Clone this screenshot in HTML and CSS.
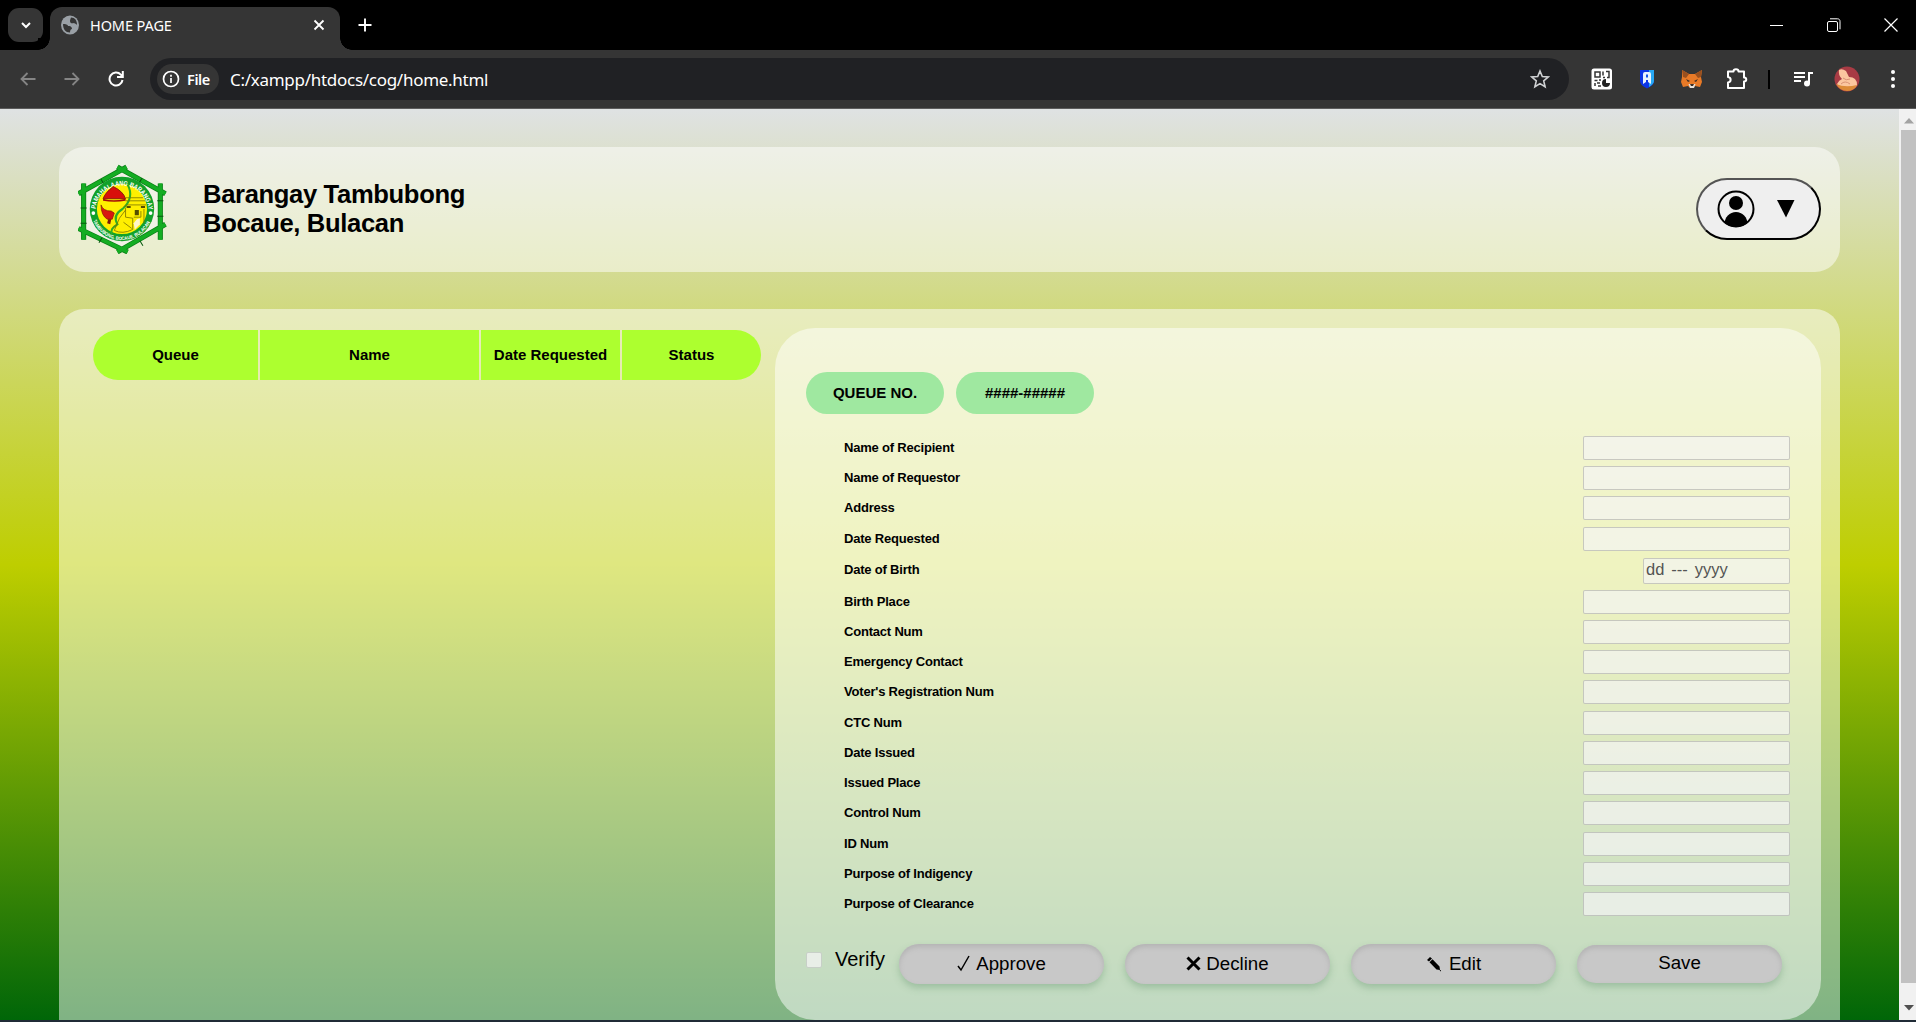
FILE: index.html
```html
<!DOCTYPE html>
<html lang="en">
<head>
<meta charset="utf-8">
<title>HOME PAGE</title>
<link rel="stylesheet" href="styles.css">
</head>
<body>
<header class="browser">
  <div class="tabstrip">
    <button class="tab-search"><svg width="12" height="12" viewBox="0 0 12 12"><path d="M2 4l4 4 4-4" fill="none" stroke="#fff" stroke-width="2"/></svg></button>
    <div class="tab">
      <svg class="globe" width="18" height="20" viewBox="0 0 18 20"><ellipse cx="9" cy="10" rx="9" ry="9.500" fill="#9aa0a6"/><path d="M10 2.500c4 0 6 3 6 7.500-1-1.500-2-1-3-2-2 .5-4 .5-4-2 0-1 .5-2 1-3.500zM2 9c2.500 0 5 .5 5 2 2 0 4 .5 4 3-1 0-2 1-2 3.500C4.500 17.500 2 14 2 9z" fill="#353535"/></svg>
      <span class="tab-title">HOME PAGE</span>
      <svg width="12" height="12" viewBox="0 0 12 12"><path d="M1.500 1.500l9 9m0-9l-9 9" stroke="#fff" stroke-width="1.800"/></svg>
    </div>
    <svg class="new-tab" width="14" height="14" viewBox="0 0 14 14"><path d="M7 .5v13M.5 7h13" stroke="#fff" stroke-width="1.900"/></svg>
    <div class="window-buttons">
      <svg width="14" height="14" viewBox="0 0 14 14"><path d="M0 7.500h13" stroke="#fff"/></svg>
      <svg width="14" height="14" viewBox="0 0 14 14" fill="none" stroke="#fff"><rect x=".5" y="3.500" width="10" height="10" rx="1.500"/><path d="M3 .8h7.500c1.500 0 2.500 1 2.500 2.500v8"/></svg>
      <svg width="14" height="14" viewBox="0 0 14 14"><path d="M.5.5l13 13m0-13l-13 13" stroke="#fff" stroke-width="1.200"/></svg>
    </div>
  </div>
  <div class="toolbar">
    <svg class="nav dim" width="16" height="14" viewBox="0 0 16 14"><path d="M15.500 7H1.500M7.500 1l-6 6 6 6"/></svg>
    <svg class="nav dim" width="16" height="14" viewBox="0 0 16 14"><path d="M.5 7h14M8.500 1l6 6-6 6"/></svg>
    <svg class="nav reload" width="16" height="16" viewBox="0 0 16 16"><path d="M14.500 9A6.500 6.500 0 1 1 12.800 3.600L14.500 5.500M14.800 0v6H9"/></svg>
    <div class="omnibox">
      <div class="file-chip">
        <svg width="18" height="18" viewBox="0 0 18 18" fill="none" stroke="#fff" stroke-width="1.700"><circle cx="9" cy="9" r="7.500"/><path d="M9 8v5M9 4.800v1.900"/></svg>
        <span>File</span>
      </div>
      <span class="url">C:/xampp/htdocs/cog/home.html</span>
      <svg class="star" width="20" height="20" viewBox="0 0 20 20"><path d="M10 2l2.300 5.500 5.900.5-4.500 3.900 1.400 5.800L10 14.600l-5.100 3.100 1.400-5.800L1.800 8l5.900-.5z" fill="none" stroke="#d0d2d4" stroke-width="1.600"/></svg>
    </div>
    <div class="extensions">
      <svg width="22" height="22" viewBox="0 0 22 22"><rect x=".5" y=".5" width="20.500" height="21" rx="2.500" fill="#fff"/><g fill="none" stroke="#333" stroke-width="1.500"><rect x="4" y="4" width="5" height="5"/><path d="M12 3.500v4M15 3.500h3v6h-2M12 9.500h2M3.500 12.500h3M8 12h2M4 15v3M6 15h3M7 18h3"/></g><path d="M15 11a4 4 0 1 0 4 4h-4z" fill="#222"/></svg>
      <svg width="16" height="20" viewBox="0 0 16 20"><path d="M1 1h14v11q0 4-7 7.500Q1 16 1 12z" fill="#0b35e8"/><path d="M10 1h5v11q0 3-5 6z" fill="#27a8f4"/><path d="M4 15V5q0-2 2-2h4q2 0 2 2v10l-3-2v-2H7v2z" fill="#e8f3ff"/><path d="M7 5.500h2v3H7z" fill="#1254e8"/></svg>
      <svg width="22" height="20" viewBox="0 0 22 20"><path d="M1 1l7 4h6l7-4-1 7 1 5-2 5-5-1-2 2h-3l-2-2-5 1-2-5 1-5z" fill="#e87a27"/><path d="M1 1l7 4-3 4-3-1zM21 1l-7 4 3 4 3-1z" fill="#99501f"/><path d="M7.500 15h7L13 19H9z" fill="#e8e1d8"/><path d="M9 15h4l-1 2h-2zM5 10l4 2-2 1zM17 10l-4 2 2 1z" fill="#3a2c24"/></svg>
      <svg width="22" height="22" viewBox="0 0 22 22"><path d="M2 3.500h5.500c0-3 5-3 5 0H18v6c3 0 3 4 0 4V20H2v-5.500c3.500-.5 3.500-5 0-5.500z" fill="none" stroke="#fff" stroke-width="2" stroke-linejoin="round"/></svg>
      <span class="divider"></span>
      <svg width="21" height="16" viewBox="0 0 21 16"><path d="M1 2h11M1 6h11M1 10h7M16 12V2h4" fill="none" stroke="#fff" stroke-width="2"/><circle cx="14" cy="12.500" r="3" fill="#fff"/></svg>
      <svg width="26" height="26" viewBox="0 0 26 26"><circle cx="13" cy="13" r="12.500" fill="#a83b44"/><path d="M3 18q2-4 5-5-4-4-3-9 3-2 7 1 2 4 3 6 8 0 8 8-2 5-10 5-8-1-10-6z" fill="#fbc69f"/><path d="M2 18q9 4 21 1-3 6-10 6T2 18z" fill="#dc8b38"/><path d="M9 12q3 3 7 1M7 18q4-4 9 0" fill="none" stroke="#d99274"/></svg>
      <svg width="6" height="20" viewBox="0 0 6 20" fill="#fff"><circle cx="3" cy="3" r="2"/><circle cx="3" cy="10" r="2"/><circle cx="3" cy="17" r="2"/></svg>
    </div>
  </div>
</header>
<div class="viewport">
  <main class="page">
    <section class="banner">
      <svg class="seal" width="90" height="90" viewBox="1.500 1 88 88">
        <path d="M45 5L81 26v39L45 86 9 65V26z" fill="#f1f2e6"/>
        <g stroke="#0b7d17" stroke-width="5" fill="none"><path d="M7 20v55M82 20v55M2 30L49 4M40 4l47 26M2 64l48 23M40 87l47-27"/></g>
        <g stroke="#14ad22" stroke-width="3.600" fill="none"><path d="M7 20v55M82 20v55M2 30L49 4M40 4l47 26M2 64l48 23M40 87l47-27"/></g>
        <path d="M4 44h6M4 59h6M79 37h6M79 52h6M24 16l3 5M64 15l-3 5M25 73l-3 5M62 76l3 5" stroke="#07580f" stroke-width="1"/>
        <circle cx="44.500" cy="45" r="31.500" fill="#12a12a"/>
        <circle cx="44.500" cy="45" r="24.500" fill="#ffef00"/>
        <path id="ring-top" d="M18.500 48a26 26 0 1 1 52 0" fill="none"/>
        <path id="ring-bottom" d="M15.700 54.500a30.300 30.300 0 0 0 57.600 0" fill="none"/>
        <text class="seal-text"><textPath href="#ring-top" startOffset="3" textLength="76" lengthAdjust="spacingAndGlyphs">PAMAHALAANG BARANGAY</textPath></text>
        <text class="seal-text small"><textPath href="#ring-bottom" startOffset="2" textLength="70" lengthAdjust="spacingAndGlyphs">TAMBUBONG, BOCAUE, BULACAN</textPath></text>
        <circle cx="16.500" cy="49" r="1.800" fill="#fff"/><circle cx="72.500" cy="49" r="1.800" fill="#fff"/>
        <path d="M50 21q7 13-5 24-10 6-5 15-8 5-5 9" fill="none" stroke="#2eaf24" stroke-width="2"/>
        <path d="M26 35q2-6 10-12 10 5 12 12z" fill="#d90f0b" stroke="#721507" stroke-width=".8"/><path d="M26 35q10 3 22 0v2q-11 2-22 0z" fill="#a30c09"/>
        <path d="M24 41q2 6 10 6l3 2-2 6-5 0q-6-4-6-14z" fill="#d81810" stroke="#721507" stroke-width=".6"/><path d="M31 55l3 0-1 5-3-1z" fill="#7b1909"/>
        <path d="M48 34h17M48 37h19M46 43l3-2h19M48 44v9l7 1v11q-10 5-18 1l5-12 6-8M56 53h7v-6M66 45v14M39 60l-4 4M46 58l8 6" fill="none" stroke="#7c7400" stroke-width=".8"/>
        <path d="M57 46h4v5h-4zM49 42h4v2h-4zM63 42h4v2h-4z" fill="#554d00"/>
        <path d="M59 55l3-1v6l-5 5-1-6z" fill="#fff6c9"/>
      </svg>
      <h1>Barangay Tambubong<br>Bocaue, Bulacan</h1>
      <button class="account">
        <svg width="38" height="38" viewBox="0 0 38 38"><defs><clipPath id="badge"><circle cx="19" cy="19" r="18"/></clipPath></defs><circle cx="19" cy="19" r="17.500" fill="none" stroke="#000" stroke-width="2"/><circle cx="19" cy="13" r="7"/><ellipse cx="19" cy="34" rx="11.500" ry="12" clip-path="url(#badge)"/></svg>
        <svg width="18" height="18" viewBox="0 0 18 18"><path d="M0 0h17.500L9 17.500z"/></svg>
      </button>
    </section>
    <section class="content">
      <div class="queue-table">
        <span>Queue</span><span>Name</span><span>Date Requested</span><span>Status</span>
      </div>
      <form class="details">
        <div class="queue-no"><span>QUEUE NO.</span><span>####-#####</span></div>
        <div class="fields">
          <label><span>Name of Recipient</span><input disabled></label>
          <label><span>Name of Requestor</span><input disabled></label>
          <label><span>Address</span><input disabled></label>
          <label class="row-gap"><span>Date Requested</span><input disabled></label>
          <label class="date-row"><span>Date of Birth</span><b class="date-box"><i>dd</i><i>---</i><i>yyyy</i></b></label>
          <label><span>Birth Place</span><input disabled></label>
          <label><span>Contact Num</span><input disabled></label>
          <label><span>Emergency Contact</span><input disabled></label>
          <label><span>Voter's Registration Num</span><input disabled></label>
          <label class="row-gap"><span>CTC Num</span><input disabled></label>
          <label><span>Date Issued</span><input disabled></label>
          <label><span>Issued Place</span><input disabled></label>
          <label><span>Control Num</span><input disabled></label>
          <label class="row-gap"><span>ID Num</span><input disabled></label>
          <label><span>Purpose of Indigency</span><input disabled></label>
          <label><span>Purpose of Clearance</span><input disabled></label>
        </div>
        <div class="actions">
          <label class="verify"><span class="box"></span>Verify</label>
          <button type="button"><svg width="14" height="17" viewBox="0 0 14 17"><path d="M1 11l3 4L12 1" fill="none" stroke="#000" stroke-width="1.500"/></svg>Approve</button>
          <button type="button"><svg width="15" height="15" viewBox="0 0 15 15"><path d="M1.500 1.500l12 12m0-12l-12 12" stroke="#000" stroke-width="3"/></svg>Decline</button>
          <button type="button" class="edit"><svg width="16" height="16" viewBox="0 0 16 16"><path d="M1 4l3-3 2 1.500L3 5.500zM3.500 6.200l3-3 7 7.300.5 3.500-3.500-.5zM13.500 14.500l1.500-.5v1.500z"/></svg>Edit</button>
          <button type="button" class="save">Save</button>
        </div>
      </form>
    </section>
  </main>
  <div class="scrollbar">
    <svg width="10" height="6" viewBox="0 0 10 6"><path d="M0 5.500L5 0l5 5.500z" fill="#a3a3a3"/></svg>
    <span class="thumb"></span>
    <svg width="10" height="6" viewBox="0 0 10 6"><path d="M0 0h10L5 5.500z" fill="#505050"/></svg>
  </div>
</div>
</body>
</html>
```
FILE: styles.css
```css
* { box-sizing: border-box; }
html, body { margin: 0; height: 100%; overflow: hidden; }
body { display: flex; flex-direction: column; font-family: "Liberation Sans", Arial, sans-serif; color: #000; background: #202b36; }
svg { display: block; flex: none; }
button { font: inherit; color: inherit; }

/* browser chrome */
.browser { height: 109px; flex: none; background: #353535; border-bottom: 1px solid #5c5c5c; color: #fff; font-family: "Noto Sans", sans-serif; }
.tabstrip { height: 50px; background: #000; display: flex; align-items: center; padding-left: 8px; }
.tab-search { width: 35px; height: 34px; margin-right: 7px; padding: 0; border: 0; border-radius: 11px; background: #353535; display: grid; place-items: center; }
.tab { position: relative; align-self: flex-end; width: 290px; height: 43px; padding: 0 15px 7px 11px; display: flex; align-items: center; background: #353535; border-radius: 12px 12px 0 0; }
.tab::before, .tab::after { content: ""; position: absolute; bottom: 0; width: 12px; height: 12px; }
.tab::before { left: -12px; background: radial-gradient(circle at 0 0, #000 11.5px, #353535 12px); }
.tab::after { right: -12px; background: radial-gradient(circle at 100% 0, #000 11.5px, #353535 12px); }
.tab-title { flex: 1; margin-left: 11px; font-size: 14.5px; letter-spacing: -0.1px; }
.new-tab { margin-left: 18px; }
.window-buttons { margin-left: auto; display: flex; gap: 43px; padding-right: 18px; }
.toolbar { height: 58px; display: flex; align-items: center; padding: 0 20px 0 20px; }
.nav { margin-right: 28px; fill: none; stroke: #fff; stroke-width: 2; }
.reload { margin-right: 26px; }
.dim { stroke: #858585; stroke-width: 1.8; }
.omnibox { flex: 1; height: 42px; border-radius: 21px; background: #202124; display: flex; align-items: center; padding: 0 19px 0 7px; margin-right: 22px; }
.file-chip { width: 62px; height: 30px; border-radius: 15px; background: #353535; display: flex; align-items: center; gap: 7px; padding-left: 5px; font-size: 14.5px; font-weight: 600; letter-spacing: -0.4px; }
.url { flex: 1; margin-left: 11px; font-size: 17px; letter-spacing: -0.28px; }
.extensions { display: flex; align-items: center; }
.extensions :nth-child(2), .extensions :nth-child(3) { margin-left: 26px; }
.extensions :nth-child(4), .extensions :nth-child(6) { margin-left: 23px; }
.extensions :nth-child(5), .extensions :nth-child(7) { margin-left: 20px; }
.extensions :nth-child(8) { margin-left: 30px; }
.extensions svg * { margin: 0; }
.divider { width: 2px; height: 19px; background: #000; }

/* page */
.viewport { flex: 1; display: flex; min-height: 0; margin-bottom: 2px; }
.page { flex: 1; padding: 38px 59px 0; display: flex; flex-direction: column; background: linear-gradient(#dfe2e3, #bece00 50%, #006608); }
.banner { height: 125px; flex: none; border-radius: 25px; background: rgba(255,255,255,.5); display: flex; align-items: center; padding: 0 19px; }
.seal { margin-top: -2px; }
.seal-text { font-size: 6.5px; font-weight: bold; fill: #fff; }
.seal-text.small { font-size: 4.8px; }
h1 { margin: -2px 0 0 35px; flex: 1; font-size: 25.6px; line-height: 29px; letter-spacing: -0.35px; }
.account { width: 125px; height: 62px; margin-top: -2px; border: 2px outset #000; border-radius: 31px; background: #efefef; display: flex; align-items: center; gap: 22px; padding: 0 0 0 19px; }
.content { flex: 1; min-height: 0; margin-top: 37px; border-radius: 25px 25px 0 0; background: rgba(255,255,255,.5); display: flex; align-items: flex-start; gap: 14px; padding: 19px 19px 0 34px; }
.queue-table { width: 668px; height: 50px; margin-top: 2px; display: grid; grid-template-columns: 165px 219px 139px 1fr; gap: 2px; border-radius: 25px; overflow: hidden; font-size: 15px; font-weight: bold; text-align: center; line-height: 50px; }
.queue-table span { background: #adff2f; }
.details { flex: 1; height: 692px; border-radius: 40px; background: rgba(255,255,255,.5); padding: 44px 31px 0; }
.queue-no { display: flex; gap: 12px; }
.queue-no span { width: 138px; height: 42px; border-radius: 21px; background: #9fe8a0; font-size: 15px; font-weight: bold; text-align: center; line-height: 42px; }
.fields { margin-top: 19px; padding-left: 38px; }
.fields label { height: 30px; display: flex; align-items: center; justify-content: space-between; font-size: 13px; font-weight: bold; letter-spacing: -0.2px; }
.fields label > span { padding-bottom: 2px; }
.fields .row-gap { height: 31px; padding-top: 1px; }
.fields .date-row { height: 33px; }
.fields input { width: 207px; height: 24px; border: 1px solid rgba(118,118,118,.35); border-radius: 2px; background: rgba(243,243,243,.7); }
.date-box { width: 147px; height: 26px; padding-left: 2px; display: flex; align-items: center; gap: 7px; border: 1px solid rgba(118,118,118,.35); border-radius: 2px; background: rgba(243,243,243,.7); color: #545454; font-weight: normal; font-size: 16.5px; letter-spacing: 0; }
.date-box i { font-style: normal; margin-top: -2px; }
.actions { margin-top: 25px; display: flex; align-items: flex-start; gap: 21px; font-size: 20px; }
.verify { width: 72px; margin-top: 4px; display: flex; align-items: center; gap: 13px; }
.box { width: 16px; height: 16px; flex: none; border: 1px solid #c7cfc7; border-radius: 2px; background: #e8eee7; }
.actions button { width: 205px; height: 40px; padding: 0 0 1px; border: 0; border-radius: 20px; background: #c8c8c8; box-shadow: inset 0 3px 5px #b4b4b4, 0 4px 7px rgba(90,140,100,.35); display: flex; align-items: center; justify-content: center; gap: 5px; font-size: 18.7px; }
.actions .edit { gap: 7px; }
.actions .save { height: 38px; margin-top: 1px; padding-bottom: 2px; }
.scrollbar { width: 17px; background: #f1f1f1; display: flex; flex-direction: column; align-items: center; padding: 9px 0 9px 2px; }
.thumb { width: 15px; height: 853px; margin: 6px 0 auto; background: #c1c1c1; }
```
